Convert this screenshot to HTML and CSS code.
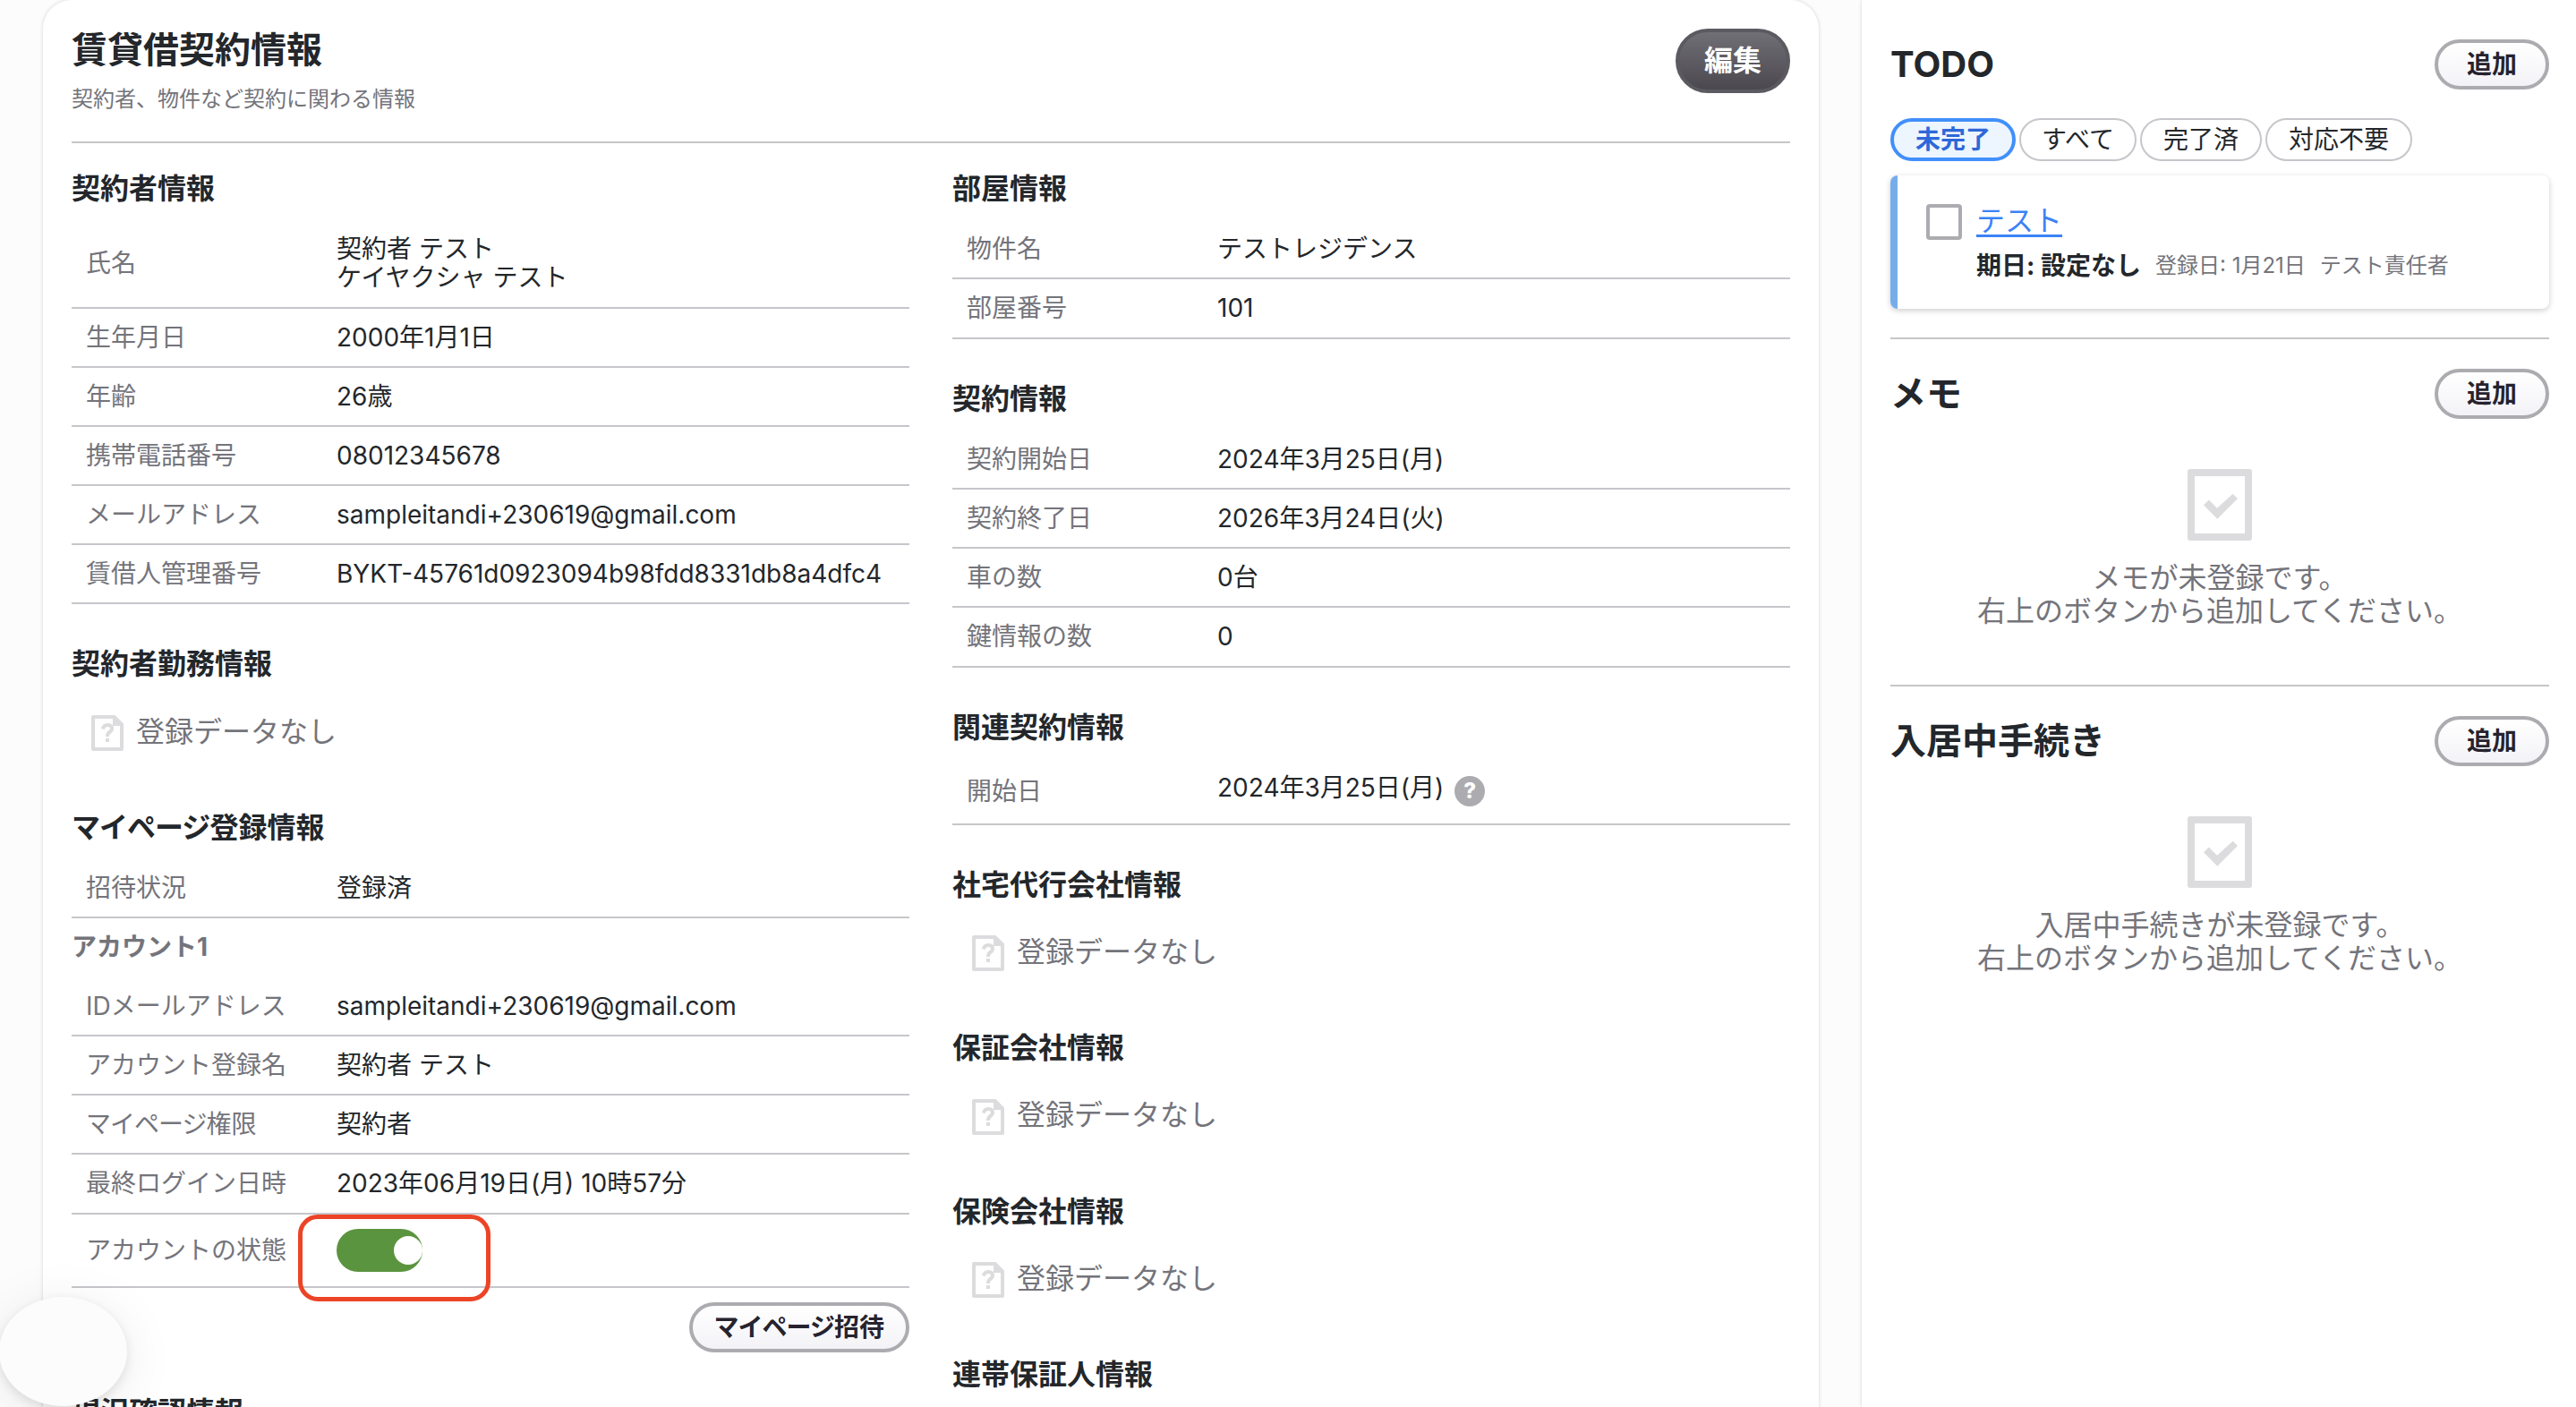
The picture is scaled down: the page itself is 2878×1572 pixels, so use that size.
FILE: index.html
```html
<!DOCTYPE html>
<html lang="ja">
<head>
<meta charset="UTF-8" />
<title>賃貸借契約情報</title>
<link rel="stylesheet" href="styles.css">
</head>
<body>

<!-- shared icons -->
<svg class="sprite" aria-hidden="true">
  <symbol id="icon-nodata" viewBox="0 0 36 40">
    <path d="M2 0H26.5L36 9.5V38a2 2 0 0 1-2 2H2a2 2 0 0 1-2-2V2a2 2 0 0 1 2-2ZM4 4V36H32V12H24V4Z" fill-rule="evenodd" />
    <path d="M12.8 15.5Q13.8 11 18.3 11Q23 11 23 15Q23 17.3 20.3 19Q18 20.500 18 24" fill="none" stroke="currentColor" stroke-width="4" />
    <rect x="16" y="26" width="4" height="4" />
  </symbol>
  <symbol id="icon-check" viewBox="0 0 72 80">
    <path d="M3 0H69a3 3 0 0 1 3 3V77a3 3 0 0 1-3 3H3a3 3 0 0 1-3-3V3a3 3 0 0 1 3-3ZM8 8V72H64V8Z" fill-rule="evenodd" />
    <path d="M18 40.300L23.800 34.500L33 43.700L50.500 27.700L56 33L33.300 55.700Z" />
  </symbol>
</svg>

<div class="layout">
  <main class="card">
    <header class="card-header">
      <div>
        <h1>賃貸借契約情報</h1>
        <p class="lead">契約者、物件など契約に関わる情報</p>
      </div>
      <button class="btn btn-dark" type="button">編集</button>
    </header>

    <div class="columns">
      <div class="column">
        <section>
          <h2>契約者情報</h2>
          <dl>
            <div class="row"><dt>氏名</dt><dd>契約者 テスト<br>ケイヤクシャ テスト</dd></div>
            <div class="row"><dt>生年月日</dt><dd>2000年1月1日</dd></div>
            <div class="row"><dt>年齢</dt><dd>26歳</dd></div>
            <div class="row"><dt>携帯電話番号</dt><dd>08012345678</dd></div>
            <div class="row"><dt>メールアドレス</dt><dd>sampleitandi+230619@gmail.com</dd></div>
            <div class="row"><dt>賃借人管理番号</dt><dd>BYKT-45761d0923094b98fdd8331db8a4dfc4</dd></div>
          </dl>
        </section>

        <section>
          <h2>契約者勤務情報</h2>
          <div class="nodata"><svg><use href="#icon-nodata" /></svg>登録データなし</div>
        </section>

        <section>
          <h2><span class="tight">マイページ</span>登録情報</h2>
          <dl>
            <div class="row"><dt>招待状況</dt><dd>登録済</dd></div>
          </dl>
          <h3>アカウント1</h3>
          <dl>
            <div class="row"><dt>IDメールアドレス</dt><dd>sampleitandi+230619@gmail.com</dd></div>
            <div class="row"><dt>アカウント登録名</dt><dd>契約者 テスト</dd></div>
            <div class="row"><dt><span class="tight">マイページ</span>権限</dt><dd>契約者</dd></div>
            <div class="row"><dt>最終ログイン日時</dt><dd>2023年06月19日(月) 10時57分</dd></div>
            <div class="row status"><dt>アカウントの状態</dt><dd><span class="toggle"></span></dd></div>
          </dl>
          <div class="actions">
            <button class="btn" type="button"><span class="tight">マイページ</span>招待</button>
          </div>
        </section>

        <section>
          <h2>現況確認情報</h2>
        </section>
      </div>

      <div class="column">
        <section>
          <h2>部屋情報</h2>
          <dl>
            <div class="row"><dt>物件名</dt><dd>テストレジデンス</dd></div>
            <div class="row"><dt>部屋番号</dt><dd>101</dd></div>
          </dl>
        </section>

        <section>
          <h2>契約情報</h2>
          <dl>
            <div class="row"><dt>契約開始日</dt><dd>2024年3月25日(月)</dd></div>
            <div class="row"><dt>契約終了日</dt><dd>2026年3月24日(火)</dd></div>
            <div class="row"><dt>車の数</dt><dd>0台</dd></div>
            <div class="row"><dt>鍵情報の数</dt><dd>0</dd></div>
          </dl>
        </section>

        <section>
          <h2>関連契約情報</h2>
          <dl>
            <div class="row row-help"><dt>開始日</dt><dd><span class="date">2024年3月25日(月)</span><span class="help">?</span></dd></div>
          </dl>
        </section>

        <section>
          <h2>社宅代行会社情報</h2>
          <div class="nodata"><svg><use href="#icon-nodata" /></svg>登録データなし</div>
        </section>

        <section>
          <h2>保証会社情報</h2>
          <div class="nodata"><svg><use href="#icon-nodata" /></svg>登録データなし</div>
        </section>

        <section>
          <h2>保険会社情報</h2>
          <div class="nodata"><svg><use href="#icon-nodata" /></svg>登録データなし</div>
        </section>

        <section>
          <h2>連帯保証人情報</h2>
        </section>
      </div>
    </div>
  </main>

  <aside class="sidebar">
    <section class="panel panel-todo">
      <div class="panel-header">
        <h2>TODO</h2>
        <button class="btn" type="button">追加</button>
      </div>
      <div class="chips">
        <span class="chip active">未完了</span>
        <span class="chip chip-all">すべて</span>
        <span class="chip">完了済</span>
        <span class="chip">対応不要</span>
      </div>
      <div class="todo">
        <span class="checkbox"></span>
        <div>
          <a class="todo-link" href="#">テスト</a>
          <p class="todo-meta"><strong>期日: 設定なし</strong><span>登録日: 1月21日</span><span>テスト責任者</span></p>
        </div>
      </div>
    </section>

    <section class="panel">
      <div class="panel-header">
        <h2>メモ</h2>
        <button class="btn" type="button">追加</button>
      </div>
      <div class="empty">
        <svg><use href="#icon-check" /></svg>
        <p>メモが未登録です。<br>右上のボタンから追加してください。</p>
      </div>
    </section>

    <section class="panel">
      <div class="panel-header">
        <h2>入居中手続き</h2>
        <button class="btn" type="button">追加</button>
      </div>
      <div class="empty">
        <svg><use href="#icon-check" /></svg>
        <p>入居中手続きが未登録です。<br>右上のボタンから追加してください。</p>
      </div>
    </section>
  </aside>
</div>

<div class="floating"></div>

</body>
</html>
```
FILE: styles.css
```css
* {
  box-sizing: border-box;
}

body {
  margin: 0;
  height: 1572px;
  overflow: hidden;
  background-color: #fcfcfc;
  color: #23272b;
  font-family: Inter, "Noto Sans CJK JP", sans-serif;
  font-size: 28px;
  line-height: 32.15px;
}

h1, h2, h3, p, dl, dd {
  margin: 0;
}

.sprite {
  display: none;
}

.layout {
  display: flex;
  justify-content: space-between;
  height: 1572px;
  padding-left: 48px;
  overflow: hidden;
}

/* main card */
.card {
  width: 1984px;
  height: 1700px;
  padding: 32px 32px 0;
  background-color: #fff;
  border-radius: 32px;
  box-shadow: 0 0 4px rgba(0, 0, 0, 0.16);
}

.card-header {
  display: flex;
  justify-content: space-between;
  align-items: flex-start;
  height: 128px;
  border-bottom: 2px solid #c6c6c8;
}

h1 {
  font-size: 40px;
  line-height: 48px;
}

.lead {
  margin-top: 16px;
  font-size: 24px;
  line-height: 29px;
  color: #74747b;
}

.columns {
  display: grid;
  grid-template-columns: 936px 936px;
  gap: 48px;
  padding-top: 31.85px;
}

.column section {
  margin-bottom: 48px;
}

h2 {
  font-size: 32px;
  line-height: 38.4px;
}

.column h2 {
  margin-bottom: 16px;
}

h3 {
  padding: 16px 0 17.5px;
  color: #74747b;
  font-size: 28px;
}

.row {
  display: flex;
  align-items: center;
  padding: 16px;
  border-bottom: 2px solid #c6c6cb;
}

dt {
  width: 280px;
  color: #74747b;
}

.status {
  height: 82px;
}

.row-help {
  height: 73.7px;
}

.row-help dd {
  display: flex;
  align-items: center;
  gap: 12px;
}

.date {
  padding-bottom: 7px;
}

.help {
  width: 34px;
  height: 34px;
  border-radius: 50%;
  background-color: #acacb0;
  color: #fff;
  font-size: 24px;
  font-weight: 800;
  line-height: 34px;
  text-align: center;
}

.tight {
  letter-spacing: -1px;
}

.toggle {
  display: flex;
  justify-content: flex-end;
  align-items: center;
  width: 96px;
  height: 48px;
  border-radius: 24px;
  background-color: #5b943f;
  position: relative;
}

.toggle::before {
  content: "";
  width: 32px;
  height: 32px;
  border-radius: 50%;
  background-color: #fff;
}

/* red frame drawn over the toggle */
.toggle::after {
  content: "";
  position: absolute;
  left: -43px;
  top: -16px;
  width: 205px;
  height: 87px;
  border: 5px solid #ec4427;
  border-radius: 22px;
}

.nodata {
  display: flex;
  align-items: center;
  gap: 14px;
  height: 80px;
  padding-left: 22px;
  color: #74747b;
  font-size: 32px;
}

.nodata svg {
  width: 36px;
  height: 40px;
  margin-top: 2px;
  fill: #dcdcde;
  color: #dcdcde;
}

.actions {
  display: flex;
  justify-content: flex-end;
  margin-top: 16px;
}

.btn {
  height: 56px;
  padding: 0 32px;
  border: 4px solid #acacb0;
  border-radius: 28px;
  background: linear-gradient(#fff, #f3f3f7);
  color: #26232e;
  font-family: inherit;
  font-size: 28px;
  font-weight: 700;
  line-height: 48px;
}

.actions .btn {
  padding: 0 24px;
}

.btn-dark {
  height: 72px;
  border-color: #5c5a61;
  border-radius: 36px;
  padding: 0 28px;
  background: linear-gradient(#737278, #49454d);
  background-origin: border-box;
  color: #fff;
  font-size: 32px;
  line-height: 60px;
}

/* sidebar */
.sidebar {
  width: 798px;
  padding: 0 30px 0 32px;
  background-color: #fff;
  box-shadow: 0 0 4px rgba(0, 0, 0, 0.16);
}

.panel {
  padding: 33px 0 64px;
  border-bottom: 2px solid #c6c6c8;
}

.panel:last-child {
  border-bottom: none;
}

.panel-todo {
  padding: 44px 0 32px;
}

.panel-header {
  display: flex;
  justify-content: space-between;
  align-items: center;
}

.panel-header h2 {
  font-size: 40px;
  line-height: 48px;
}

.chips {
  display: flex;
  gap: 4px;
  margin-top: 32px;
}

.chip {
  height: 48px;
  padding: 0 24px;
  border: 2px solid #c6c6cb;
  border-radius: 24px;
  line-height: 44px;
}

.chip-all {
  padding: 0 23px;
}

.chip.active {
  border: 4px solid #418ffb;
  background-color: #edf6fe;
  color: #2e68d8;
  font-weight: 700;
  line-height: 40px;
}

.todo {
  display: flex;
  gap: 16px;
  height: 149px;
  margin-top: 16px;
  padding: 32px;
  border-left: 8px solid #76ade9;
  border-radius: 8px;
  box-shadow: 0 2px 6px rgba(0, 0, 0, 0.2);
}

.checkbox {
  width: 40px;
  height: 40px;
  border: 4px solid #acacb0;
  border-radius: 4px;
}

.todo-link {
  display: block;
  width: max-content;
  color: #3b82f7;
  font-size: 32px;
  line-height: 37px;
  text-decoration-thickness: 3px;
  text-underline-offset: 4px;
}

.todo-meta {
  display: flex;
  align-items: center;
  gap: 16px;
  margin-top: 16px;
  color: #74747b;
  font-size: 24px;
}

.todo-meta strong {
  color: #23272b;
  font-size: 28px;
}

.empty {
  display: flex;
  flex-direction: column;
  align-items: center;
  gap: 24px;
  margin-top: 56px;
  color: #74747b;
  font-size: 32px;
  line-height: 36.5px;
  text-align: center;
}

.empty svg {
  width: 72px;
  height: 80px;
  fill: #dcdcde;
}

/* round launcher in the bottom left corner */
.floating {
  position: absolute;
  left: -1px;
  bottom: 1px;
  width: 143px;
  height: 122px;
  border-radius: 50%;
  background-color: #fcfcfc;
  box-shadow: 0 4px 12px rgba(0, 0, 0, 0.1), 0 8px 60px rgba(0, 0, 0, 0.08);
}
```
